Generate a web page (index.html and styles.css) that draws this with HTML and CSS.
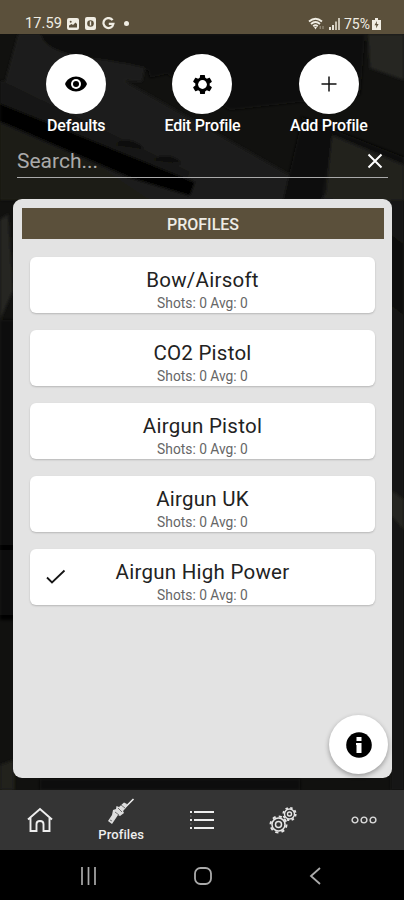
FILE: index.html
```html
<!DOCTYPE html>
<html lang="en">
<head>
<meta charset="utf-8">
<title>Profiles</title>
<link rel="stylesheet" href="styles.css">
</head>
<body>
<div class="phone">
  <svg class="backdrop" viewBox="0 0 404 900" aria-hidden="true">
    <defs><filter id="soft"><feGaussianBlur stdDeviation="1.5"/></filter></defs>
    <rect width="404" height="900" fill="#11110f"/>
    <g filter="url(#soft)">
      <path d="M18 34H42L404 240V200H0V100Z" fill="#1e1e1b"/>
      <path d="M40 34H365L360 95L230 110L160 70L60 70Z" fill="#11110f"/>
      <path d="M40 34C50 60 90 55 145 68L142 82L55 74Z" fill="#1d1d1a"/>
      <path d="M145 58C150 38 180 35 205 36L204 65L150 78Z" fill="#0a0a09"/>
      <path d="M368 34H404V80L370 68Z" fill="#252622"/>
      <path d="M0 80L190 172L185 182L0 102Z" fill="#151512"/>
      <path d="M0 100L150 200H0Z" fill="#1b1b18"/>
      <path d="M0 103L195 182L190 196L130 178L0 122Z" fill="#060605"/>
      <path d="M116 145C120 137 139 139 144 149ZM154 160C158 153 178 154 182 164Z" fill="#0b0b0a"/>
      <path d="M300 116L404 157V166L310 133Z" fill="#080807"/>
      <path d="M300 128H335L322 200H283Z" fill="#0a0a09"/>
      <path d="M332 135L404 165V200H325Z" fill="#22221f"/>
      <path d="M0 220L8 214L13 290L0 320Z" fill="#272724"/>
      <path d="M0 320H14V620H0Z" fill="#0d0c0a"/>
      <path d="M0 545H14V550H0ZM0 615H14V620H0Z" fill="#000"/>
      <path d="M391 200H404V790H391Z" fill="#151512"/>
      <path d="M391 235L404 245V315L391 305Z" fill="#090908"/>
      <path d="M391 490L404 500V530L391 515Z" fill="#252520"/>
      <path d="M0 765L14 760V790H0Z" fill="#20201d"/>
      <path d="M40 779H300V790H40Z" fill="#080807"/>
    </g>
  </svg>

  <header class="status">
    <div class="status-side">
      <span class="time">17.59</span>
      <svg width="12" height="12" viewBox="0 0 12 12"><rect width="12" height="12" rx="2" fill="#f0ede3"/><path d="M2 9.500V7.500L4.500 6L6 7L8.500 4.500L10 6V9.500Z" fill="#5b503b"/><circle cx="3.700" cy="3.700" r="1" fill="#5b503b"/></svg>
      <svg width="11" height="13" viewBox="0 0 11 13"><rect width="11" height="13" rx="2" fill="#f0ede3"/><circle cx="5.500" cy="6.500" r="3.300" fill="#5b503b"/><path d="M5.500 4.300V8.500" stroke="#f0ede3" stroke-width="1.400"/></svg>
      <svg width="13" height="13" viewBox="0 0 13 13"><path d="M10.600 3.200A5 5 0 1 0 11.400 6.900H6.800" fill="none" stroke="#f0ede3" stroke-width="2.200"/></svg>
      <i class="dot"></i>
    </div>
    <div class="status-side status-right">
      <svg width="17" height="14" viewBox="0 0 17 14" fill="none" stroke="#f0ede3" stroke-width="1.800"><path d="M1 4.500Q7.500-1 14 4.500M3 7Q7.500 3 12 7M5.200 9.300Q7.500 7.300 9.800 9.300"/><path d="M6 10L7.500 12.500L9 10Z" fill="#f0ede3" stroke="none"/><path d="M12.200 12V9M15 9V12" stroke="#a79f8d" stroke-width="1"/></svg>
      <svg width="11" height="12" viewBox="0 0 11 12"><path d="M0 9H2V12H0ZM3 7H5V12H3Z" fill="#e6e1d5"/><path d="M6 3.500H8V12H6ZM9 0H11V12H9Z" fill="#c9c2b2"/></svg>
      <span class="battery">75%</span>
      <svg width="9" height="12" viewBox="0 0 9 12"><path d="M3 0H6V2H9V12H0V2H3Z" fill="#f0ede3"/><path d="M5 3L2.500 7.300H4.300L4 10.500L6.600 6H4.800Z" fill="#5b503b"/></svg>
    </div>
  </header>

  <div class="actions">
    <div class="action">
      <span class="round"><svg width="24" height="24" viewBox="0 0 24 24"><path d="M1 12C3 7.300 7.100 4.500 12 4.500S21 7.300 23 12C21 16.700 16.900 19.500 12 19.500S3 16.700 1 12Z"/><circle cx="12" cy="12" r="5" fill="#fff"/><circle cx="12" cy="12" r="3"/></svg></span>
      <span>Defaults</span>
    </div>
    <div class="action">
      <span class="round"><svg width="23" height="23" viewBox="0 0 24 24"><path d="M19.430 12.980c.040-.320.070-.640.070-.980s-.030-.660-.070-.980l2.110-1.650c.190-.150.240-.420.120-.640l-2-3.460c-.120-.220-.390-.300-.610-.220l-2.490 1c-.520-.400-1.080-.730-1.690-.980l-.380-2.650A.488.488 0 0 0 14 2h-4c-.250 0-.460.180-.490.420l-.380 2.650c-.610.250-1.170.590-1.690.980l-2.490-1c-.230-.090-.490 0-.610.220l-2 3.460c-.130.220-.070.490.120.640l2.110 1.650c-.040.320-.070.650-.070.980s.030.660.070.980l-2.110 1.650c-.190.150-.240.420-.120.640l2 3.460c.120.220.390.300.610.220l2.490-1c.520.400 1.080.730 1.690.980l.380 2.650c.030.240.240.420.490.420h4c.250 0 .460-.180.490-.420l.380-2.650c.610-.250 1.170-.590 1.690-.980l2.490 1c.230.090.490 0 .610-.220l2-3.460c.120-.220.070-.490-.120-.640z"/><circle cx="12" cy="12" r="4.600" fill="#fff"/></svg></span>
      <span>Edit Profile</span>
    </div>
    <div class="action">
      <span class="round"><svg width="24" height="24" viewBox="0 0 24 24"><path d="M12 4.500V19.500M4.500 12H19.500" stroke="#111" stroke-width="1.500"/></svg></span>
      <span>Add Profile</span>
    </div>
  </div>

  <div class="search">
    <span>Search...</span>
    <svg width="16" height="16" viewBox="0 0 16 16"><path d="M1.500 1.500L14.500 14.500M14.500 1.500L1.500 14.500" stroke="#fff" stroke-width="2"/></svg>
  </div>

  <main class="panel">
    <h1>PROFILES</h1>
    <div class="list">
      <div class="card"><b>Bow/Airsoft</b><small>Shots: 0 Avg: 0</small></div>
      <div class="card"><b>CO2 Pistol</b><small>Shots: 0 Avg: 0</small></div>
      <div class="card"><b>Airgun Pistol</b><small>Shots: 0 Avg: 0</small></div>
      <div class="card"><b>Airgun UK</b><small>Shots: 0 Avg: 0</small></div>
      <div class="card"><svg class="check" width="20" height="16" viewBox="0 0 20 16"><path d="M1 8.500L6 13.500L18.500 1.500" fill="none" stroke="#151515" stroke-width="1.800"/></svg><b>Airgun High Power</b><small>Shots: 0 Avg: 0</small></div>
    </div>
    <div class="info"><svg width="26" height="26" viewBox="0 0 26 26"><circle cx="13" cy="13" r="12.800"/><path d="M10.500 5H15.500V9H10.500ZM10 11H15.500V21H10.500V13H10Z" fill="#fff"/></svg></div>
  </main>

  <nav class="tabs">
    <div class="tab"><svg width="28" height="28" viewBox="0 0 28 28" fill="none" stroke="#eee" stroke-width="1.900"><path d="M2 13.500L14 3L26 13.500M4.500 12V25H10.500V18C10.500 14 17.500 14 17.500 18V25H23.500V12"/></svg></div>
    <div class="tab tab-active">
      <svg width="28" height="27" viewBox="0 0 28 27"><path d="M15 12.500L26.500 1" stroke="#eee" stroke-width="1.600"/><path d="M9.500 8L12 9L17 4.500L20 6L19 9.500L16 13L17 15L13 18L11 17L5 26L1 23L5 17L6 12L9 11Z" fill="#ddd"/><path d="M8 14L12 17M11 10L15 14M14 7L18 10M3 22L5 23" stroke="#555" stroke-width=".800"/></svg>
      <span>Profiles</span>
    </div>
    <div class="tab"><svg width="24" height="22" viewBox="0 0 24 22" stroke="#eee" stroke-width="2"><path d="M4 3H24M4 11H24M4 19H24M0 3H2M0 11H2M0 19H2"/><path d="M0 7H1.500M0 15H1.500" stroke="#777" stroke-width="1"/></svg></div>
    <div class="tab"><svg width="28" height="28" viewBox="0 0 28 28" fill="none" stroke="#e6e6e6"><circle cx="9.500" cy="18.500" r="6.500" stroke-width="1.500"/><circle cx="9.500" cy="18.500" r="8" stroke-width="2" stroke-dasharray="3.140 3.143"/><circle cx="9.500" cy="18.500" r="3" stroke-width="1.500"/><circle cx="20.500" cy="8" r="5" stroke-width="1.400"/><circle cx="20.500" cy="8" r="6.200" stroke-width="1.800" stroke-dasharray="2.430 2.440"/><circle cx="20.500" cy="8" r="2" stroke-width="1.400"/></svg></div>
    <div class="tab"><svg width="26" height="8" viewBox="0 0 26 8" fill="none" stroke="#ddd" stroke-width="1.400"><circle cx="4" cy="4" r="2.900"/><circle cx="13" cy="4" r="2.900"/><circle cx="22" cy="4" r="2.900"/></svg></div>
  </nav>

  <footer class="system">
    <svg width="18" height="18" viewBox="0 0 18 18"><path d="M2 0V18M8.500 0V18M15 0V18" stroke="#aaa" stroke-width="1.700"/></svg>
    <svg width="18" height="18" viewBox="0 0 18 18"><rect x="1" y="1" width="16" height="16" rx="5.500" fill="none" stroke="#aaa" stroke-width="1.800"/></svg>
    <svg width="18" height="18" viewBox="0 0 18 18"><path d="M13 1L4 9L13 17" fill="none" stroke="#aaa" stroke-width="1.800"/></svg>
  </footer>
</div>
</body>
</html>
```
FILE: styles.css
```css
* { box-sizing: border-box; }
body { margin: 0; font-family: Roboto, "Liberation Sans", sans-serif; }
svg { display: block; flex: none; }
.phone { position: relative; isolation: isolate; display: flex; flex-direction: column; width: 404px; height: 900px; overflow: hidden; background: #11110f; }
.backdrop { position: absolute; inset: 0; z-index: -1; width: 404px; height: 900px; }

.status { display: flex; justify-content: space-between; height: 34px; padding: 13px 23px 0 25px; background: #5b503b; color: #f0ede3; }
.status-side { display: flex; align-items: center; height: 21px; gap: 6px; font-size: 14.500px; }
.time { width: 36px; white-space: nowrap; letter-spacing: .1px; }
.dot { width: 5px; height: 5px; margin-left: 3px; border-radius: 50%; background: #f0ede3; }
.status-right { gap: 4px; }
.battery { margin-right: -2px; font-size: 14px; }

.actions { display: grid; grid-template-columns: repeat(3, 126.300px); justify-content: center; padding: 20px 0 0 1px; }
.action { display: flex; flex-direction: column; align-items: center; gap: 1px; color: #fff; font-size: 16px; font-weight: 500; line-height: 22px; letter-spacing: -.2px; }
.round { display: flex; align-items: center; justify-content: center; width: 60px; height: 60px; border-radius: 50%; background: #fff; }

.search { display: flex; justify-content: space-between; align-items: center; height: 33px; margin: 8px 16px 0 17px; padding: 0 5px 0 0; border-bottom: 1px solid #aaa; color: #aaa; font-size: 21px; }

.panel { position: relative; height: 579px; margin: 21px 12px 0 13px; padding: 9px 8px 0 9px; border-radius: 9px; background: #e3e3e3; }
.panel h1 { margin: 0; height: 31px; background: #5b503b; color: #eeece6; font-size: 16px; font-weight: 500; line-height: 33px; text-align: center; }
.list { display: flex; flex-direction: column; gap: 17px; padding: 18px 9px 0 8px; }
.card { position: relative; display: flex; flex-direction: column; align-items: center; height: 56px; padding-top: 11px; border-radius: 6px; background: #fff; box-shadow: 0 1px 2px #0003; }
.card b { color: #222; font-size: 20.500px; font-weight: 400; line-height: 25px; letter-spacing: .25px; }
.card small { color: #666; font-size: 13.800px; line-height: 20px; }
.check { position: absolute; left: 16px; top: 20px; }
.info { position: absolute; right: 4px; bottom: 4px; display: flex; align-items: center; justify-content: center; width: 59px; height: 59px; border-radius: 50%; background: #fff; box-shadow: 0 2px 5px #0005; }

.tabs { display: grid; grid-template-columns: repeat(5, 1fr); height: 60px; margin-top: 12px; background: #343434; }
.tab { display: flex; flex-direction: column; align-items: center; justify-content: center; color: #eee; font-size: 13px; font-weight: 500; }
.tab-active { justify-content: flex-start; padding-top: 8px; }
.tab-active span { line-height: 19px; letter-spacing: .1px; }
.system { display: flex; align-items: center; justify-content: space-between; height: 50px; padding: 2px 79px 0 80px; background: #000; }
```
